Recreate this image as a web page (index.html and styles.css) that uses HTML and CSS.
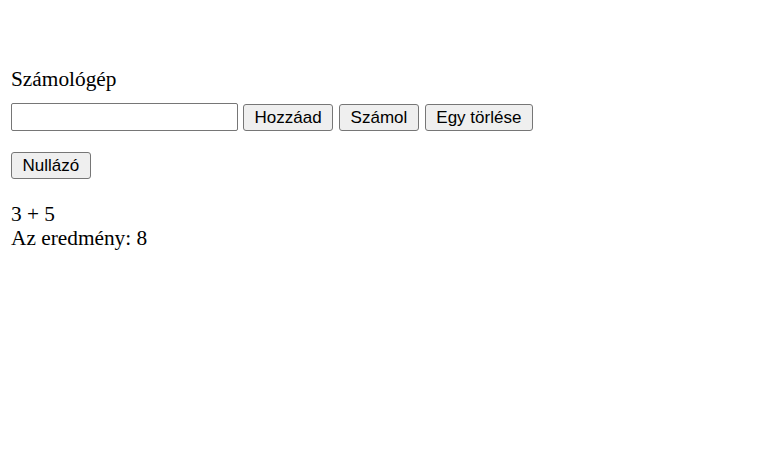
FILE: index.html
```html
<!DOCTYPE html>
<html lang="hu">
<head>
<meta charset="utf-8">
<title>Számológép</title>
<link rel="stylesheet" href="styles.css">
</head>
<body>
<main class="page">
  <div class="title">Számológép</div>
  <div class="row">
    <input class="field" type="text">
    <button class="btn">Hozzáad</button>
    <button class="btn">Számol</button>
    <button class="btn">Egy törlése</button>
  </div>
  <div class="row reset-row">
    <button class="btn">Nullázó</button>
  </div>
  <div class="output">
    <div class="line">3 + 5</div>
    <div class="line">Az eredmény: 8</div>
  </div>
</main>
</body>
</html>
```
FILE: styles.css
```css
html, body {
  margin: 0;
  padding: 0;
  background: #ffffff;
}

.page {
  display: flex;
  flex-direction: column;
  align-items: flex-start;
  padding: 67px 11px 0 11px;
  font-family: "Liberation Serif", "Times New Roman", serif;
  font-size: 21.33px;
  line-height: 24.5px;
  color: #000000;
}

.title {
  margin: 0 0 11.5px 0;
}

.row {
  display: flex;
  align-items: center;
  gap: 6px;
  height: 28px;
}

.field {
  box-sizing: border-box;
  width: 227px;
  height: 28px;
  margin: 0 -1px 0 0;
  border: 1px solid #767676;
  border-radius: 2px;
  padding: 1px 2px;
  font-family: "Liberation Sans", Arial, sans-serif;
  font-size: 17px;
  background: #ffffff;
}

.btn {
  box-sizing: border-box;
  height: 27px;
  padding: 0 10.5px;
  border: 1px solid #767676;
  border-radius: 3px;
  background: #efefef;
  color: #000000;
  font-family: "Liberation Sans", Arial, sans-serif;
  font-size: 17px;
  line-height: 19px;
}

.reset-row {
  margin-top: 21px;
  align-items: flex-start;
}

.output {
  margin-top: 21.5px;
}
```
